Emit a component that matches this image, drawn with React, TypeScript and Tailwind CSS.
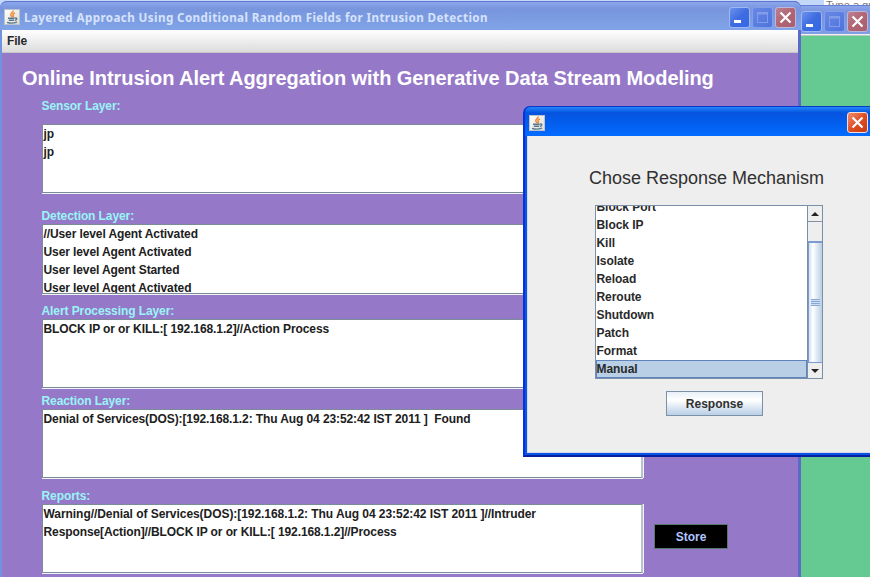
import type { ReactNode } from "react";

function JavaIcon() {
  return (
    <svg width="16" height="16" viewBox="0 0 16 16" className="shrink-0">
      <defs>
        <linearGradient id="tile" x1="0" y1="0" x2="1" y2="1">
          <stop offset="0" stopColor="#ffffff" />
          <stop offset="1" stopColor="#dcdad4" />
        </linearGradient>
      </defs>
      <rect x="0.5" y="0.5" width="15" height="15" fill="url(#tile)" stroke="#bcc3cc" />
      <path d="M9 1.500c.8 1.800-3 2.700-2.200 4.700.3.700 1.100 1 .8 2.100M11 4c-2 .7-2.700 1.600-1.700 2.600.5.600 0 1.200-.8 1.700" fill="none" stroke="#ee8a34" strokeWidth="1.500" />
      <path d="M4 9.300h6.500M4.800 11.300h5.400M10.800 9.100c2.700-.7 2.500 1.900.2 2.300M3 13.300c2.500 1 7 .9 10-.1" fill="none" stroke="#56798f" strokeWidth="1.400" />
    </svg>
  );
}

function WindowButton({ kind, active = false }: { kind: "min" | "max" | "close"; active?: boolean }) {
  const look =
    kind === "close"
      ? active
        ? "border-[#f6ded8] bg-linear-to-br from-[#ee8d70] via-[#df4d22] to-[#c53b12]"
        : "border-[#bfb6dc] bg-linear-to-br from-[#bd8093] via-[#b16572] to-[#a95f70]"
      : kind === "max"
        ? "border-[#839fec] bg-linear-to-br from-[#6787e4] to-[#4d74dd]"
        : "border-[#9eb7f5] bg-linear-to-br from-[#6c91ed] via-[#3e6ce0] to-[#3268e6]";
  return (
    <div className={`size-[21px] shrink-0 rounded-[3px] border ${look}`}>
      <svg width="19" height="19" viewBox="0 0 19 19" fill="none">
        {kind === "min" && <path d="M4 13.500h7" stroke="#fff" strokeWidth="3" />}
        {kind === "max" && (
          <>
            <rect x="4.500" y="4.500" width="10" height="10" stroke="#839cea" />
            <path d="M4 5.500h11" stroke="#839cea" strokeWidth="2" />
          </>
        )}
        {kind === "close" && <path d="M4.500 4.500l10 10M14.500 4.500l-10 10" stroke="#fff" strokeWidth="2.200" />}
      </svg>
    </div>
  );
}

function Layer({ label, gap, boxHeight, children }: { label: string; gap: string; boxHeight: string; children?: ReactNode }) {
  return (
    <section className={gap}>
      <h2 className="-ml-[0.500px] h-[17px] pt-px text-[12px] leading-[17px] font-bold tracking-[-0.09px] text-[#98f5f6]">{label}</h2>
      <div className={`w-[601px] overflow-hidden border border-r-2 border-[#7b8c99] border-r-[#b8c3ca] bg-white pl-[0.500px] text-[12px] leading-[18px] font-bold tracking-[-0.1px] whitespace-nowrap text-[#202020] shadow-[0_1px_0_#f2f3f8,1px_0_0_#f2f3f8] ${boxHeight}`}>
        {children}
      </div>
    </section>
  );
}

function MainWindow() {
  return (
    <div className="absolute top-[1px] left-0 flex h-[600px] w-[801px] flex-col rounded-t-[7px] bg-linear-to-r from-[#7292df] via-[#7593df] to-[#5d68c8]">
      <header className="flex h-[29px] shrink-0 items-center rounded-t-[7px] border-t border-[#6175cf] bg-linear-to-b from-[#8ba7ec] via-[#7895dd] via-25% to-[#80a4e7] pt-[2px] pr-[5px] pl-[4px]">
        <JavaIcon />
        <h1 className="ml-[4px] grow pt-px font-['Noto_Sans',sans-serif] text-[12.500px] leading-[18px] font-bold tracking-[0.430px] whitespace-nowrap text-[#d7e3fb]">
          <span className="inline-block origin-left scale-x-[0.93]">Layered Approach Using Conditional Random Fields for Intrusion Detection</span>
        </h1>
        <div className="flex gap-[2px]">
          <WindowButton kind="min" />
          <WindowButton kind="max" />
          <WindowButton kind="close" />
        </div>
      </header>
      <nav className="mr-[3px] ml-[2px] h-[23px] shrink-0 border-b border-[#c8c6c5] bg-linear-to-b from-white to-[#dcdcdc] pl-[5px] text-[12px] leading-[22px] font-bold tracking-[-0.2px] text-[#292929]">
        File
      </nav>
      <main className="mr-[3px] ml-[2px] grow bg-[#9678c8] pl-[40px]">
        <h1 className="-ml-[20px] h-[43px] pt-[11px] text-[20px] leading-[28px] font-bold tracking-[-0.065px] whitespace-nowrap text-white">
          Online Intrusion Alert Aggregation with Generative Data Stream Modeling
        </h1>
        <Layer label="Sensor Layer:" gap="mt-px" boxHeight="mt-[10px] h-[69px]">
          <p>jp</p>
          <p>jp</p>
        </Layer>
        <Layer label="Detection Layer:" gap="mt-[14px]" boxHeight="h-[70px]">
          <p>//User level Agent Activated</p>
          <p>User level Agent Activated</p>
          <p>User level Agent Started</p>
          <p>User level Agent Activated</p>
        </Layer>
        <Layer label="Alert Processing Layer:" gap="mt-[8px]" boxHeight="h-[69px]">
          <p>BLOCK IP or or KILL:[ 192.168.1.2]//Action Process</p>
        </Layer>
        <Layer label="Reaction Layer:" gap="mt-[4px]" boxHeight="h-[69px]">
          <p>Denial of Services(DOS):[192.168.1.2: Thu Aug 04 23:52:42 IST 2011 ]&nbsp; Found</p>
        </Layer>
        <div className="flex items-start gap-[11px]">
          <Layer label="Reports:" gap="mt-[9px]" boxHeight="h-[69px]">
            <p className="tracking-[-0.055px]">Warning//Denial of Services(DOS):[192.168.1.2: Thu Aug 04 23:52:42 IST 2011 ]//Intruder</p>
            <p>Response[Action]//BLOCK IP or or KILL:[ 192.168.1.2]//Process</p>
          </Layer>
          <button className="mt-[46px] h-[25px] w-[74px] border border-[#58776f] bg-black text-[12px] leading-[22px] font-bold text-[#b0c5ff]">Store</button>
        </div>
      </main>
    </div>
  );
}

function BackgroundWindow() {
  return (
    <div className="absolute top-[5px] left-[795px] h-[580px] w-[80px] bg-[#64ca92]">
      <header className="flex h-[29px] items-center gap-[2px] border-t border-[#647fd4] bg-linear-to-b from-[#8aa5ea] via-[#7892dc] via-25% to-[#7f9fe5] pt-[2px] pl-[6px]">
        <WindowButton kind="min" />
        <WindowButton kind="max" />
        <WindowButton kind="close" />
      </header>
      <div className="h-[2px] border-b border-[#b9c9bc] bg-[#f1f2ef]" />
    </div>
  );
}

const mechanisms = ["Block Port", "Block IP", "Kill", "Isolate", "Reload", "Reroute", "Shutdown", "Patch", "Format", "Manual"];

function Arrow({ down = false }: { down?: boolean }) {
  return (
    <svg width="14" height="15" viewBox="0 0 14 15" className="shrink-0 bg-[#eeeeee]">
      <path d={down ? "M3 6h8l-4 4z" : "M3 10h8l-4-4z"} fill="#222" />
    </svg>
  );
}

function ResponseDialog() {
  return (
    <div className="absolute top-[106px] left-[523px] flex h-[351px] w-[360px] flex-col rounded-tl-[7px] border-b-2 border-l-2 border-b-[#081fa0] border-l-[#0831d9] bg-[#0855e8]">
      <header className="flex h-[30px] shrink-0 items-center justify-between rounded-tl-[6px] border-t border-[#0839c3] bg-linear-to-b from-[#2685fb] via-[#0553df] via-20% to-[#036cff] pt-[2px] pr-[15px] pl-[4px]">
        <JavaIcon />
        <WindowButton kind="close" active />
      </header>
      <div className="mb-[2px] ml-[2px] flex grow flex-col border-b border-l border-[#d8dbe4] bg-[#eeeeee]">
        <h2 className="mt-[31px] ml-[61px] text-[18px] leading-[22px] whitespace-nowrap text-[#303030]">Chose Response Mechanism</h2>
        <div className="mt-[16px] ml-[67px] flex h-[174px] w-[228px] border border-[#7b90a8]">
          <ul className="flex grow flex-col justify-end overflow-hidden bg-white text-[12px] leading-[18px] font-bold tracking-[-0.05px] text-[#292929]">
            {mechanisms.map((name) =>
              name === "Manual" ? (
                <li key={name} className="h-[18px] shrink-0 border border-[#5f83bc] bg-[#b8cfe5] leading-[17px]">
                  <span className="-ml-[0.500px]">{name}</span>
                </li>
              ) : (
                <li key={name} className="h-[18px] shrink-0 pl-[0.500px]">
                  {name}
                </li>
              ),
            )}
          </ul>
          <div className="flex w-[15px] flex-col border-l border-[#7b90a8]">
            <Arrow />
            <div className="h-[20px] border-t border-[#8093a5] bg-[#eeeeee]" />
            <div className="flex grow flex-col items-center border-y border-l border-t-2 border-[#7b9bcf] bg-linear-to-r from-[#d2e1f0] via-white via-30% to-[#b8cfe5]">
              <div className="mt-[56px] flex w-[9px] flex-col gap-px border-y border-[#8aa8d8] bg-[#cbdcf1] py-px">
                <div className="h-px bg-[#8aa8d8]" />
                <div className="h-px bg-[#8aa8d8]" />
              </div>
            </div>
            <Arrow down />
          </div>
        </div>
        <button className="mt-[12px] ml-[138px] h-[25px] w-[97px] border border-[#7d90a4] bg-linear-to-b from-[#e8f0f8] via-white via-35% to-[#b8cfe5] pt-[2px] text-[12px] leading-[21px] font-bold text-[#303030]">
          Response
        </button>
      </div>
    </div>
  );
}

export default function App() {
  return (
    <div className="relative h-[577px] w-[870px] overflow-hidden bg-[#c3d8fb] font-['Liberation_Sans',Arial,sans-serif]">
      <div className="ml-[824px] h-[6px] overflow-hidden bg-white pl-[2px] text-[11px] leading-[10px] whitespace-nowrap text-[#777]">Type a question</div>
      <BackgroundWindow />
      <MainWindow />
      <ResponseDialog />
    </div>
  );
}
